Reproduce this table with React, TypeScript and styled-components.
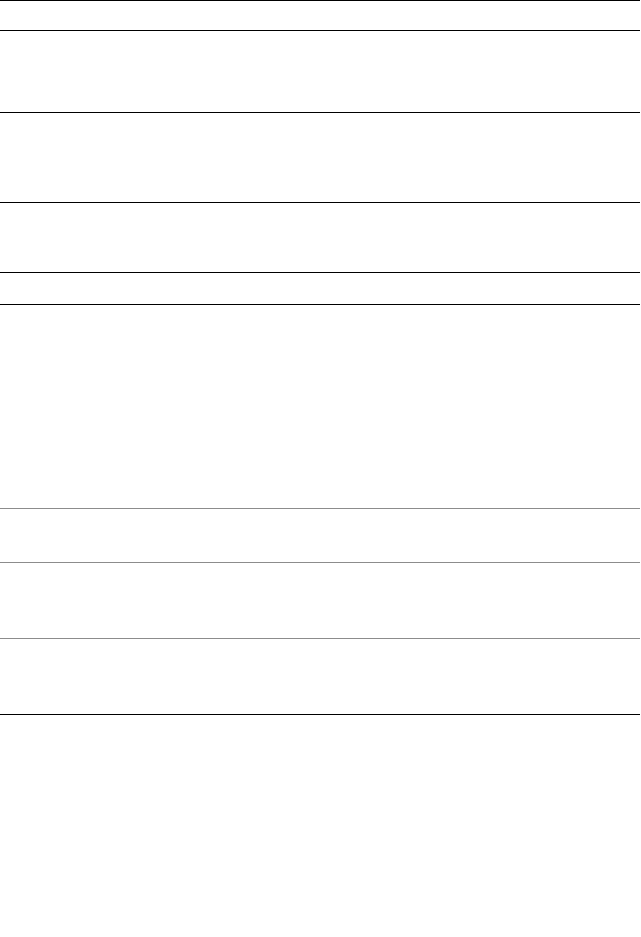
import React from "react";
import styled, { createGlobalStyle } from "styled-components";

const Global = createGlobalStyle`
  html, body { margin: 0; padding: 0; background: #ffffff; }
  body { font-family: "Liberation Sans", Arial, sans-serif; }
`;

const Page = styled.div`
  width: 640px;
  display: flex;
  flex-direction: column;
`;

const Section = styled.section<{ $h: number; $tone: "dark" | "light"; $last?: boolean }>`
  box-sizing: border-box;
  height: ${(p) => p.$h}px;
  border-top: 1px solid ${(p) => (p.$tone === "dark" ? "#000000" : "#8c8c8c")};
  ${(p) => (p.$last ? "border-bottom: 1px solid #000000;" : "")}
`;

const rows: { h: number; tone: "dark" | "light" }[] = [
  { h: 30, tone: "dark" },
  { h: 82, tone: "dark" },
  { h: 90, tone: "dark" },
  { h: 70, tone: "dark" },
  { h: 32, tone: "dark" },
  { h: 204, tone: "dark" },
  { h: 54, tone: "light" },
  { h: 76, tone: "light" },
  { h: 77, tone: "light" },
];

export default function App() {
  return (
    <>
      <Global />
      <Page>
        {rows.map((r, i) => (
          <Section key={i} $h={r.h} $tone={r.tone} $last={i === rows.length - 1} />
        ))}
      </Page>
    </>
  );
}
